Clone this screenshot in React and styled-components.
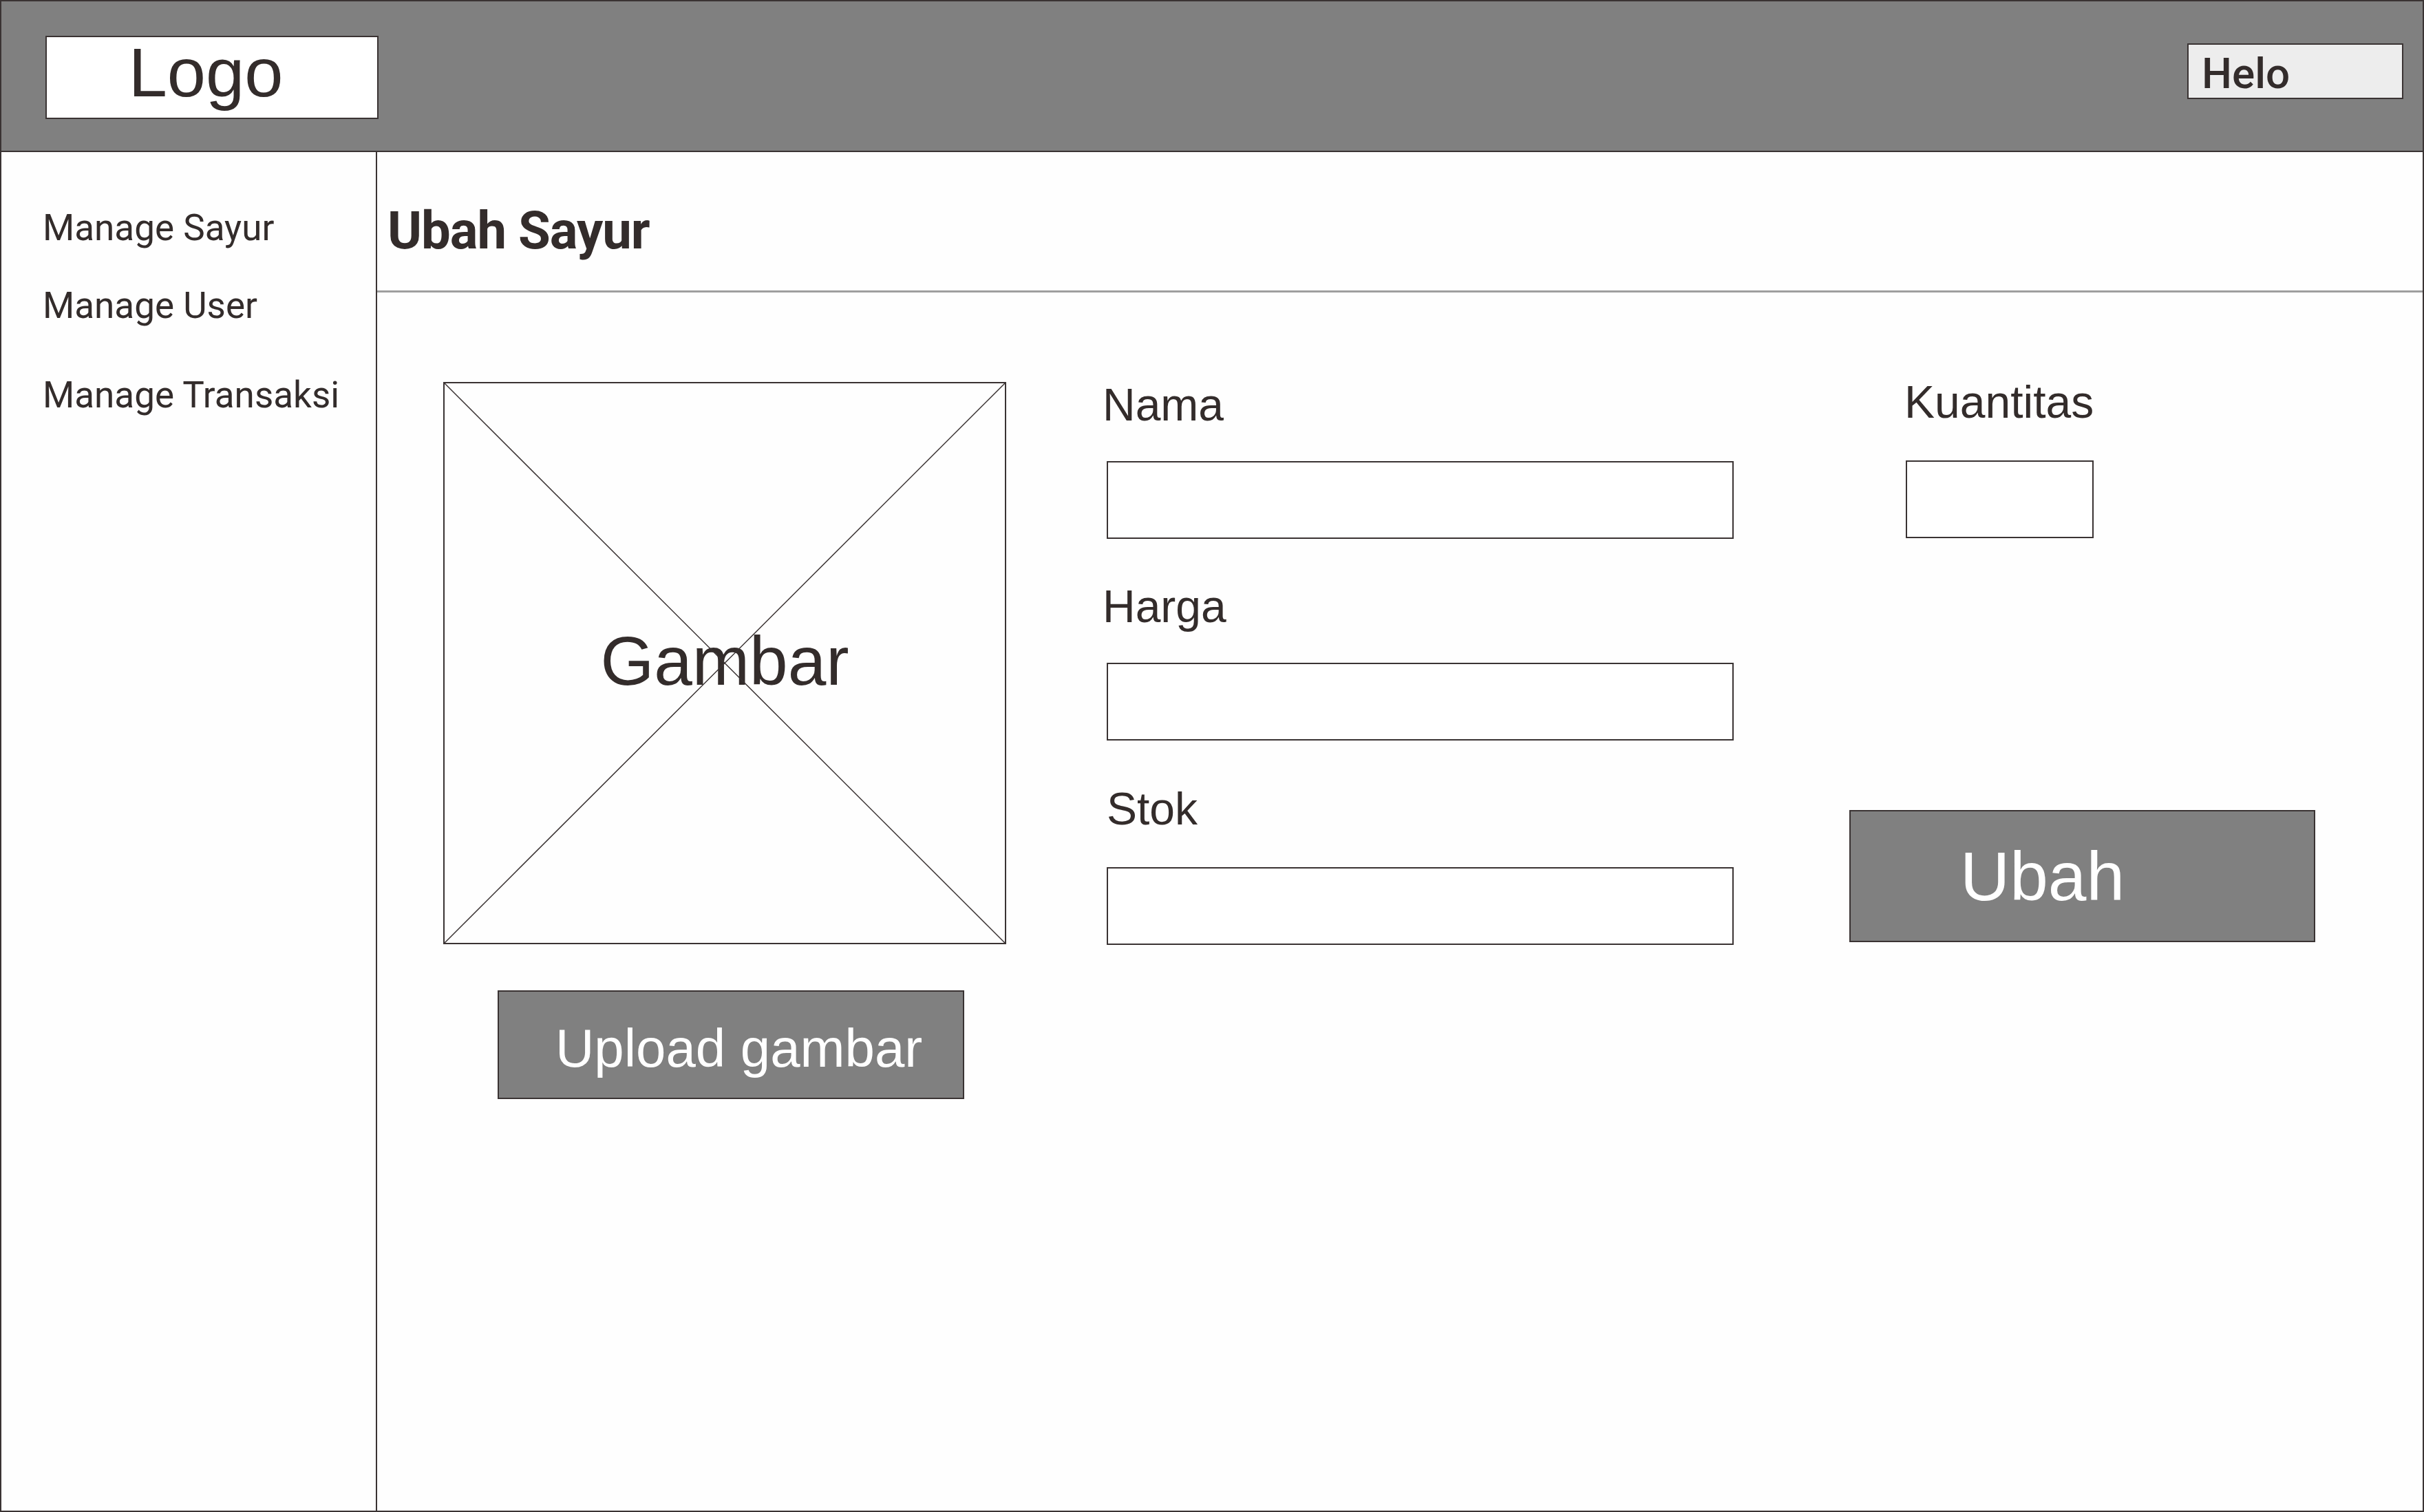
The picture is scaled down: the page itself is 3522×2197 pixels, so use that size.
import React from "react";
import styled, { createGlobalStyle } from "styled-components";

const ink = "#332c2b";
const line = "#3a3333";

const GlobalStyle = createGlobalStyle`
  html, body { margin: 0; padding: 0; background: #fefefe; }
  * { box-sizing: border-box; }
`;

const Frame = styled.div`
  width: 3522px;
  height: 2197px;
  border: 2px solid ${line};
  display: flex;
  flex-direction: column;
  background: #fefefe;
  color: ${ink};
`;

const Header = styled.header`
  height: 219px;
  flex: none;
  background: #808080;
  border-bottom: 2px solid ${line};
  display: flex;
  justify-content: space-between;
  align-items: flex-start;
  padding: 0 28px 0 64px;
`;

const LogoBox = styled.div`
  margin-top: 50px;
  width: 484px;
  height: 121px;
  background: #ffffff;
  border: 2px solid ${line};
  display: flex;
  align-items: center;
  justify-content: center;
  padding: 0 18px 14px 0;
  font-family: "Liberation Sans", Arial, sans-serif;
  font-size: 101px;
  line-height: 1;
`;

const UserBox = styled.div`
  margin-top: 61px;
  width: 314px;
  height: 81px;
  background: #ededed;
  border: 2px solid ${line};
  display: flex;
  align-items: center;
  padding: 6px 0 0 19px;
  font-family: Roboto, "Noto Sans", sans-serif;
  font-weight: 500;
  font-size: 62px;
  line-height: 1;
`;

const Body = styled.div`
  flex: 1;
  display: flex;
  min-height: 0;
`;

const Sidebar = styled.nav`
  width: 546px;
  flex: none;
  border-right: 2px solid ${line};
  display: flex;
  flex-direction: column;
  padding: 84px 0 0 60px;
`;

const NavItem = styled.div`
  margin-top: ${(p) => p.$top || 0}px;
  font-family: Roboto, "Noto Sans", sans-serif;
  font-size: 53px;
  line-height: 53px;
`;

const Main = styled.main`
  flex: 1;
  display: flex;
  flex-direction: column;
`;

const TitleBar = styled.div`
  height: 204px;
  flex: none;
  border-bottom: 3px solid #9e9e9e;
  padding: 76px 0 0 15px;
`;

const Title = styled.h1`
  margin: 0;
  font-family: Roboto, "Noto Sans", sans-serif;
  font-weight: 700;
  font-size: 76px;
  line-height: 76px;
  letter-spacing: -1px;
`;

const Form = styled.div`
  display: flex;
  align-items: flex-start;
  padding: 130px 0 0 96px;
`;

const ImageColumn = styled.div`
  display: flex;
  flex-direction: column;
  align-items: flex-start;
`;

const ImageBox = styled.div`
  position: relative;
  width: 818px;
  height: 817px;
  border: 2px solid ${line};
  display: flex;
  align-items: center;
  justify-content: center;
  padding-bottom: 8px;
  font-family: "Liberation Sans", Arial, sans-serif;
  font-size: 100px;
  line-height: 1;
`;

const Cross = styled.svg`
  position: absolute;
  inset: 0;
  width: 100%;
  height: 100%;
`;

const GreyButton = styled.button`
  display: flex;
  align-items: center;
  margin: ${(p) => p.$margin};
  width: ${(p) => p.$w}px;
  height: ${(p) => p.$h}px;
  padding: ${(p) => p.$pad};
  background: #808080;
  border: 2px solid ${line};
  border-radius: 0;
  color: #ffffff;
  font-family: "Liberation Sans", Arial, sans-serif;
  font-size: ${(p) => p.$size}px;
  line-height: 1;
  cursor: pointer;
`;

const FieldsColumn = styled.div`
  margin-left: ${(p) => p.$ml}px;
  display: flex;
  flex-direction: column;
  align-items: flex-start;
  gap: ${(p) => p.$gap || 65}px;
`;

const Field = styled.div`
  display: flex;
  flex-direction: column;
  gap: ${(p) => p.$gap || 49}px;
  margin-left: ${(p) => p.$ml || 0}px;
  margin-top: ${(p) => p.$mt || 0}px;
`;

const Label = styled.label`
  margin-left: ${(p) => (p.$dx !== undefined ? p.$dx : -6)}px;
  font-family: "Liberation Sans", Arial, sans-serif;
  font-size: 66px;
  line-height: 66px;
`;

const TextBox = styled.input`
  width: ${(p) => p.$w}px;
  height: 113px;
  border: 2px solid ${line};
  border-radius: 0;
  background: #ffffff;
  outline: none;
  padding: 0 16px;
  font-family: "Liberation Sans", Arial, sans-serif;
  font-size: 48px;
`;

export default function App() {
  return (
    <>
      <GlobalStyle />
      <Frame>
        <Header>
          <LogoBox>Logo</LogoBox>
          <UserBox>Helo</UserBox>
        </Header>
        <Body>
          <Sidebar>
            <NavItem>Manage Sayur</NavItem>
            <NavItem $top={60}>Manage User</NavItem>
            <NavItem $top={77}>Manage Transaksi</NavItem>
          </Sidebar>
          <Main>
            <TitleBar>
              <Title>Ubah Sayur</Title>
            </TitleBar>
            <Form>
              <ImageColumn>
                <ImageBox>
                  Gambar
                  <Cross viewBox="0 0 100 100" preserveAspectRatio="none">
                    <line x1="0" y1="0" x2="100" y2="100" stroke={line} strokeWidth="1.5" vectorEffect="non-scaling-stroke" />
                    <line x1="100" y1="0" x2="0" y2="100" stroke={line} strokeWidth="1.5" vectorEffect="non-scaling-stroke" />
                  </Cross>
                </ImageBox>
                <GreyButton $margin="67px 0 0 79px" $w={678} $h={158} $pad="10px 0 0 82px" $size={78}>
                  Upload gambar
                </GreyButton>
              </ImageColumn>
              <FieldsColumn $ml={146}>
                <Field>
                  <Label>Nama</Label>
                  <TextBox $w={911} />
                </Field>
                <Field>
                  <Label>Harga</Label>
                  <TextBox $w={911} />
                </Field>
                <Field $mt={1} $gap={52}>
                  <Label $dx={0}>Stok</Label>
                  <TextBox $w={911} />
                </Field>
              </FieldsColumn>
              <FieldsColumn $ml={168}>
                <Field $ml={82} $mt={-4} $gap={52}>
                  <Label $dx={-2}>Kuantitas</Label>
                  <TextBox $w={273} />
                </Field>
                <GreyButton $margin="330px 0 0 0" $w={677} $h={192} $pad="0 0 0 159px" $size={100}>
                  Ubah
                </GreyButton>
              </FieldsColumn>
            </Form>
          </Main>
        </Body>
      </Frame>
    </>
  );
}
